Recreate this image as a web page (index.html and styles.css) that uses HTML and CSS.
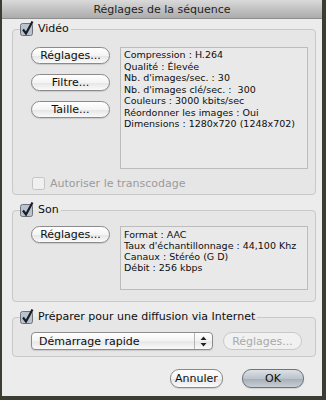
FILE: index.html
```html
<!DOCTYPE html>
<html lang="fr">
<head>
    <meta charset="UTF-8">
    <title>Réglages de la séquence</title>
    <link rel="stylesheet" href="styles.css">
</head>
<body>

<div class="window">
    <div class="titlebar">Réglages de la séquence</div>

    <div class="sheet">
        <fieldset class="group group-video">
            <legend>
                <label class="check">
                    <svg class="box" width="14" height="15" viewBox="0 0 14 15"><rect x="0.5" y="2.5" width="12" height="12" rx="2" fill="#b9c3cf" stroke="#6d737b"/><path d="M3 8.5 L6 12.5 L12.5 0.5" fill="none" stroke="#1b1d22" stroke-width="2.2"/></svg>
                    Vidéo
                </label>
            </legend>
            <div class="group-row">
                <div class="button-col">
                    <span class="button">Réglages...</span>
                    <span class="button">Filtre...</span>
                    <span class="button">Taille...</span>
                </div>
                <div class="info info-video">
                    <div>Compression : H.264</div>
                    <div>Qualité : Élevée</div>
                    <div>Nb. d'images/sec. : 30</div>
                    <div>Nb. d'images clé/sec. :&nbsp; 300</div>
                    <div>Couleurs : 3000 kbits/sec</div>
                    <div>Réordonner les images : Oui</div>
                    <div>Dimensions : 1280x720 (1248x702)</div>
                </div>
            </div>
            <label class="check disabled">
                <svg class="box" width="14" height="15" viewBox="0 0 14 15"><rect x="0.5" y="1.5" width="12" height="12" rx="2" fill="#f0f0f0" stroke="#c4c4c4"/></svg>
                Autoriser le transcodage
            </label>
        </fieldset>

        <fieldset class="group group-son">
            <legend>
                <label class="check">
                    <svg class="box" width="14" height="15" viewBox="0 0 14 15"><rect x="0.5" y="2.5" width="12" height="12" rx="2" fill="#b9c3cf" stroke="#6d737b"/><path d="M3 8.5 L6 12.5 L12.5 0.5" fill="none" stroke="#1b1d22" stroke-width="2.2"/></svg>
                    Son
                </label>
            </legend>
            <div class="group-row">
                <div class="button-col">
                    <span class="button">Réglages...</span>
                </div>
                <div class="info info-son">
                    <div>Format : AAC</div>
                    <div>Taux d'échantillonnage : 44,100 Khz</div>
                    <div>Canaux : Stéréo (G D)</div>
                    <div>Débit : 256 kbps</div>
                </div>
            </div>
        </fieldset>

        <fieldset class="group group-web">
            <legend>
                <label class="check">
                    <svg class="box" width="14" height="15" viewBox="0 0 14 15"><rect x="0.5" y="2.5" width="12" height="12" rx="2" fill="#b9c3cf" stroke="#6d737b"/><path d="M3 8.5 L6 12.5 L12.5 0.5" fill="none" stroke="#1b1d22" stroke-width="2.2"/></svg>
                    Préparer pour une diffusion via Internet
                </label>
            </legend>
            <div class="web-row">
                <div class="popup">
                    <span class="popup-label">Démarrage rapide</span>
                    <span class="popup-arrows">
                        <svg width="7" height="11" viewBox="0 0 7 11"><path d="M3.5 0.5 L6.5 4 L0.5 4 Z M3.5 10.5 L6.5 7 L0.5 7 Z" fill="#222"/></svg>
                    </span>
                </div>
                <span class="button disabled">Réglages...</span>
            </div>
        </fieldset>

        <div class="actions">
            <span class="button">Annuler</span>
            <span class="button default">OK</span>
        </div>
    </div>
</div>

</body>
</html>
```

FILE: styles.css
```css
body {
    margin: 0;
    background-color: #3a3d31;
    font-family: "DejaVu Sans", sans-serif;
    color: #0e0e0e;
}
.window {
    margin-left: 2px;
    width: 320px;
    height: 396px;
    background-color: #ececec;
}
.titlebar {
    height: 19px;
    line-height: 19px;
    text-align: center;
    font-size: 11px;
    color: #1e1e1e;
    background: linear-gradient(#dadada, #c0c0c0 55%, #acacac);
    border-bottom: 1px solid #8e8e8e;
    box-sizing: border-box;
}
.sheet {
    padding: 3px 6px 0 10px;
}

/* groupes */
.group {
    margin: 0;
    border: 1px solid #c9c9c9;
    border-radius: 4px;
    background-color: #e6e6e6;
    padding: 0 7px 0 18px;
    min-width: 0;
}
.group legend {
    padding: 0 2px 0 0;
    margin-left: -11px;
    height: 14px;
    line-height: 14px;
}
.group-video {
    padding-top: 11px;
    padding-bottom: 4px;
}
.group-son {
    margin-top: 8px;
    padding-top: 9px;
    padding-bottom: 11px;
}
.group-web {
    margin-top: 8px;
    padding-top: 8px;
    padding-bottom: 6px;
}

.check {
    display: flex;
    align-items: center;
    gap: 4px;
    font-size: 11px;
    white-space: nowrap;
}
.check .box {
    flex: none;
    margin-top: -2px;
}
.check.disabled {
    margin: 8px 0 0 1px;
    height: 13px;
    color: #9b9b9b;
}
.check.disabled .box {
    margin-top: 0;
}

.group-row {
    display: flex;
    gap: 10px;
}
.button-col {
    display: flex;
    flex-direction: column;
    gap: 10px;
    width: 79px;
}

/* boutons */
.button {
    display: flex;
    align-items: center;
    justify-content: center;
    box-sizing: border-box;
    height: 17px;
    border: 1px solid #8a8a8a;
    border-radius: 9px;
    background: linear-gradient(#ffffff, #f4f4f4 50%, #e6e6e6 55%, #fafafa);
    box-shadow: 0 1px 1px rgba(0, 0, 0, 0.12);
    font-size: 11px;
    white-space: nowrap;
}
.button.disabled {
    width: 79px;
    height: 18px;
    border-color: #c8c8c8;
    color: #a9a9a9;
    background: #f1f1f1;
    box-shadow: none;
}
.button.default {
    border-color: #6c737c;
    background: linear-gradient(#dde1e6, #bcc3cb 50%, #a8b0b9 55%, #c8ced5);
}

/* zones d'information */
.info {
    box-sizing: border-box;
    width: 188px;
    padding: 1px 3px;
    border: 1px solid #bcbcbc;
    background-color: #e9e9e9;
    font-size: 9.5px;
    line-height: 11.5px;
    white-space: nowrap;
}
.info-video {
    height: 122px;
}
.info-son {
    height: 64px;
    padding-top: 2px;
    line-height: 11px;
}

/* diffusion */
.web-row {
    display: flex;
    gap: 10px;
}
.popup {
    display: flex;
    align-items: center;
    box-sizing: border-box;
    width: 182px;
    height: 18px;
    border: 1px solid #8c8c8c;
    border-radius: 4px;
    background: linear-gradient(#ffffff, #f3f3f3 50%, #e7e7e7 55%, #fafafa);
    box-shadow: 0 1px 1px rgba(0, 0, 0, 0.12);
    font-size: 11px;
}
.popup-label {
    flex: 1;
    padding-left: 7px;
}
.popup-arrows {
    display: flex;
    align-items: center;
    justify-content: center;
    width: 17px;
    height: 100%;
    border-left: 1px solid #b5b5b5;
}

.actions {
    display: flex;
    justify-content: flex-end;
    gap: 19px;
    margin-top: 12px;
    padding-right: 12px;
}
.actions .button {
    height: 19px;
    width: 53px;
}
.actions .button.default {
    width: 62px;
}
```
